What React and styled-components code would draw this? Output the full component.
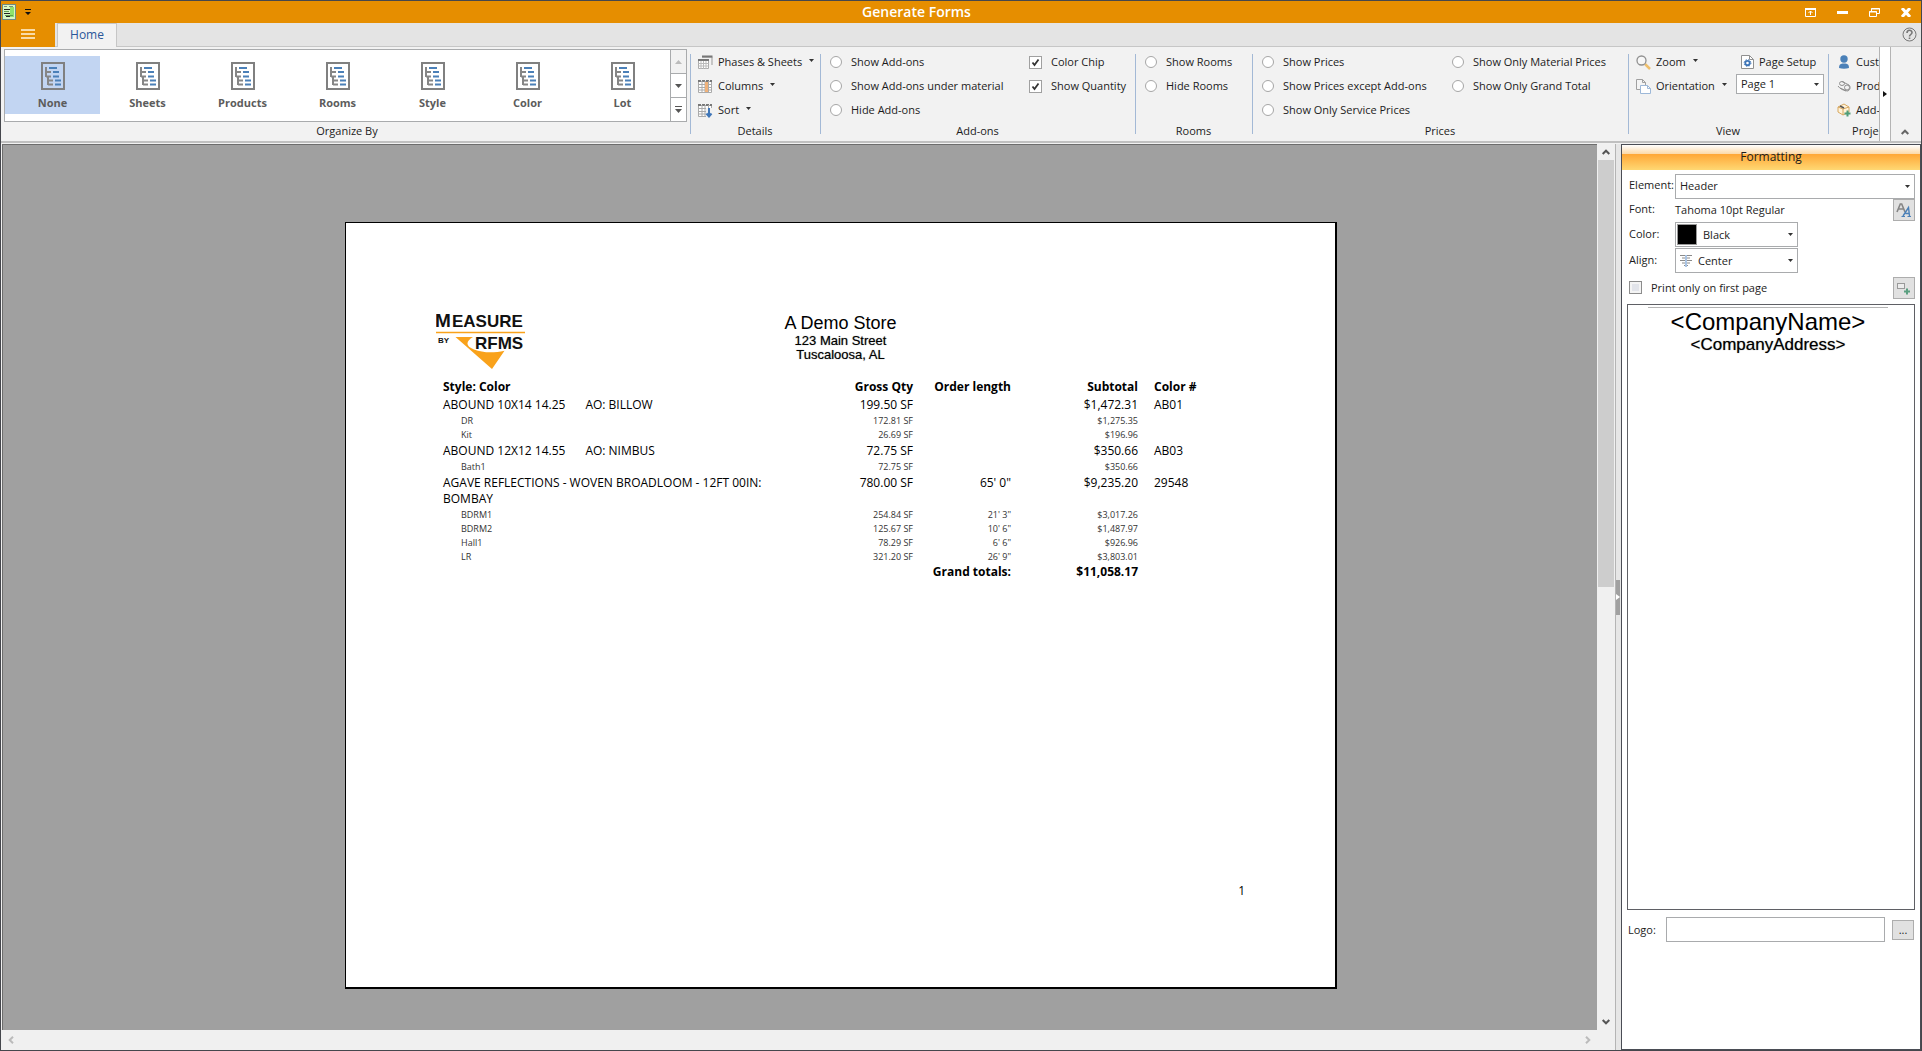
import React from 'react';
import styled, { createGlobalStyle, css } from 'styled-components';

const GlobalStyle = createGlobalStyle`
  *, *::before, *::after { box-sizing: border-box; }
  body { margin: 0; background: #f2f2f2; }
  body, button, input, select {
    font-family: "Open Sans", "Noto Sans", sans-serif;
    font-size: 11px;
    line-height: 16px;
    color: #1c1c1c;
  }
  button { padding: 0; border: 0; background: none; }
`;

const Window = styled.div`
  display: flex;
  flex-direction: column;
  height: 100vh;
  border: 1px solid #45474d;
  overflow: hidden;
`;

/* Title bar */
const TitleBar = styled.header`
  display: flex;
  align-items: center;
  height: 22px;
  flex: none;
  padding: 0 7px 0 1px;
  background: #e68e00;
`;
const TitleSide = styled.div`
  display: flex;
  align-items: center;
  gap: 9px;
  width: 29px;
`;
const Title = styled.h1`
  flex: 1;
  margin: 0;
  text-align: center;
  font-size: 14px;
  line-height: 20px;
  font-weight: 600;
  color: #fff;
`;
const WindowButtons = styled.div`
  display: flex;
  align-items: center;
  gap: 16px;
`;
const GlyphButton = styled.button`
  display: flex;
  align-items: center;
  justify-content: center;
  width: 16px;
  height: 16px;
`;

/* Tabs */
const TabBar = styled.nav`
  display: flex;
  height: 24px;
  flex: none;
  background: #e4e4e4;
  border-bottom: 1px solid #c6c6c6;
  padding-right: 4px;
`;
const MenuButton = styled.button`
  width: 54px;
  height: 24px;
  margin-right: 2px;
  background: #e68e00;
`;
const Tab = styled.button`
  width: 60px;
  height: 24px;
  padding-bottom: 1px;
  border: 1px solid #c6c6c6;
  border-bottom: 0;
  background: #f2f2f2;
  color: #2a579a;
  font-size: 12px;
`;
const HelpSlot = styled.div`
  display: flex;
  align-items: center;
  margin-left: auto;
`;

/* Ribbon */
const Ribbon = styled.section`
  display: flex;
  height: 96px;
  flex: none;
  background: #f2f2f2;
  border-bottom: 2px solid #c0c0c0;
`;
const Groups = styled.div`
  display: flex;
  flex: 1;
  min-width: 0;
  overflow: hidden;
  padding-left: 3px;
`;
const Group = styled.div`
  position: relative;
  display: flex;
  flex-direction: column;
  flex: none;
  width: ${(p) => p.$width}px;
  ${(p) => !p.$first && css`
    &::before {
      content: "";
      position: absolute;
      left: 0;
      top: 7px;
      bottom: 7px;
      width: 1px;
      background: #a3b9d6;
    }
  `}
`;
const GroupBody = styled.div`
  display: flex;
  height: 76px;
  padding: ${(p) => p.$pad || '3px 8px 0'};
`;
const GroupLabel = styled.div`
  text-align: center;
  line-height: 16px;
`;

const Gallery = styled.div`
  display: flex;
  width: 683px;
  height: 73px;
  border: 1px solid #a9abad;
  background: #fff;
`;
const GalleryItem = styled.button`
  display: flex;
  flex-direction: column;
  align-items: center;
  gap: 5px;
  width: 95px;
  height: 58px;
  margin-top: 6px;
  padding-top: 6px;
  background: ${(p) => (p.$selected ? '#c2d5f2' : 'transparent')};
  color: #5c5c5c;
  font-weight: 700;
`;
const GalleryScroll = styled.div`
  display: flex;
  flex-direction: column;
  width: 16px;
  border-left: 1px solid #a9abad;
`;
const ScrollStep = styled.button`
  display: flex;
  align-items: center;
  justify-content: center;
  flex: 1;
  background: ${(p) => (p.disabled ? '#f2f2f2' : '#fff')};
  & + & { border-top: 1px solid #a9abad; }
`;

const Stack = styled.div`
  display: flex;
  flex-direction: column;
  width: ${(p) => (p.$width ? p.$width + 'px' : 'auto')};
  flex: none;
`;
const Command = styled.button`
  display: flex;
  align-items: center;
  height: 24px;
  gap: 5px;
  padding-left: ${(p) => p.$indent || 0}px;
  white-space: nowrap;
  svg { flex: none; }
`;
const Choice = styled.label`
  display: flex;
  align-items: center;
  gap: 9px;
  height: 24px;
  white-space: nowrap;
`;
const Radio = styled.input`
  appearance: none;
  width: 12px;
  height: 12px;
  margin: 0;
  border: 1px solid #a6a6a6;
  border-radius: 50%;
  background: #fff;
`;
const Tick = styled.input`
  appearance: none;
  width: 13px;
  height: 13px;
  margin: 0;
  border: 1px solid ${(p) => (p.$grey ? '#8c8c8c' : '#a0a0a0')};
  background: ${(p) => (p.$grey ? '#e2e4ea' : '#fff')};
  box-shadow: ${(p) => (p.$grey ? 'inset 0 0 0 2px #f4f4f4' : 'none')};
  &:checked {
    background: #fff url("data:image/svg+xml,%3Csvg xmlns='http://www.w3.org/2000/svg' viewBox='0 0 11 11'%3E%3Cpath d='M2.5 5.5 4.5 8 8.5 2.5' fill='none' stroke='%23333' stroke-width='1.8'/%3E%3C/svg%3E") center / 11px 11px;
  }
`;
const InnerRule = styled.div`
  width: 1px;
  height: 66px;
  margin: 3px 4px 0 0;
  background: #a8a8a8;
`;
const RibbonScroll = styled.button`
  display: flex;
  align-items: center;
  justify-content: center;
  width: 12px;
  flex: none;
  background: #fff;
  border: 1px solid #b4b4b4;
  border-width: 0 1px;
`;
const RibbonEnd = styled.div`
  display: flex;
  align-items: flex-end;
  justify-content: center;
  width: 30px;
  flex: none;
  padding: 0 3px 1px 0;
`;

/* Drop-downs */
const SelectBox = styled.div`
  display: flex;
  align-items: center;
  height: ${(p) => p.$height || 25}px;
  width: ${(p) => (p.$width ? p.$width + 'px' : '100%')};
  gap: 3px;
  padding: 0 4px 0 ${(p) => p.$inset || 1}px;
  border: 1px solid #a9abad;
  background: #fff;
`;
const Select = styled.select`
  appearance: none;
  flex: 1;
  min-width: 0;
  height: 100%;
  padding: 0 0 0 3px;
  border: 0;
  outline: 0;
  background: transparent;
  font-size: ${(p) => p.$size || 11}px;
`;

/* Work area */
const Work = styled.main`
  display: flex;
  flex: 1;
  min-height: 0;
  padding-top: 1px;
`;
const Viewer = styled.section`
  display: grid;
  grid-template: minmax(0, 1fr) 20px / minmax(0, 1fr) 18px;
  flex: 1;
  min-width: 0;
  padding-left: 1px;
  background: #f0f0f0;
`;
const Canvas = styled.div`
  overflow: hidden;
  padding: 77px 0 0 82px;
  background: #a0a0a0;
  border: 1px solid #6d6d6d;
  border-width: 1px 0 0 1px;
`;
const ScrollBar = styled.div`
  display: flex;
  flex-direction: ${(p) => (p.$across ? 'row' : 'column')};
  align-items: center;
  justify-content: space-between;
  padding: 0 1px;
  background: #f0f0f0;
`;
const Track = styled.div`
  flex: 1;
  align-self: stretch;
`;
const Thumb = styled.div`
  height: 50%;
  background: #cdcdcd;
`;
const Splitter = styled.div`
  display: flex;
  align-items: center;
  width: 6px;
  background: #e6e6e6;
  border-left: 1px solid #b4b4b4;
`;
const Grip = styled.div`
  display: flex;
  align-items: center;
  width: 4px;
  height: 35px;
  background: #a0a0a0;
`;

/* Report page */
const Sheet = styled.article`
  display: flex;
  flex-direction: column;
  width: 992px;
  height: 767px;
  margin: 0 auto;
  padding: 88px 90px;
  border: 1px solid #000;
  border-width: 1px 2px 2px 1px;
  background: #fff;
  color: #000;
`;
const SheetHead = styled.div`
  display: grid;
  grid-template-columns: 94px 1fr 94px;
  height: 67px;
`;
const Company = styled.div`
  padding-top: 1px;
  text-align: center;
  font-family: "Liberation Sans", Arial, sans-serif;
  font-size: 13px;
  line-height: 14px;
  text-shadow: 0 0 1px #777;
`;
const CompanyTitle = styled.div`
  font-size: 18px;
  line-height: 22px;
  text-shadow: none;
`;
const Report = styled.table`
  width: 760px;
  margin-left: 7px;
  border-collapse: collapse;
  table-layout: fixed;
  th, td {
    padding: 1px 0;
    text-align: right;
    vertical-align: top;
    font-size: 12px;
    line-height: 16px;
    font-weight: 400;
    white-space: nowrap;
  }
  th { font-weight: 700; }
  tfoot th { padding: 0; }
  th:first-child, td:first-child { text-align: left; white-space: normal; }
  th:last-child, td:last-child { padding-left: 16px; text-align: left; }
`;
const RoomRow = styled.tr`
  && td {
    padding: 0;
    font-size: 9px;
    line-height: 14px;
    color: #333;
  }
  && td:first-child { padding-left: 18px; }
`;
const AddOn = styled.span`
  margin-left: 20px;
`;
const PageNumber = styled.div`
  margin-top: auto;
  text-align: right;
  font-size: 12px;
`;

/* Formatting panel */
const Panel = styled.aside`
  display: flex;
  flex-direction: column;
  width: 300px;
  flex: none;
  border: 1px solid #4a4d55;
  background: #fff;
`;
const PanelTitle = styled.h2`
  margin: 0;
  height: 25px;
  flex: none;
  text-align: center;
  font-size: 12px;
  line-height: 24px;
  font-weight: 400;
  background: linear-gradient(#fff, #fcd9a8 36%, #ffa838 38%, #ffd873);
`;
const Form = styled.div`
  display: flex;
  flex-direction: column;
  flex: 1;
  min-height: 0;
  padding: 4px 5px 0;
`;
const Field = styled.div`
  display: flex;
  align-items: center;
  height: ${(p) => p.$height || 25}px;
  flex: none;
  padding-left: 2px;
  margin-bottom: 1px;
`;
const FieldLabel = styled.label`
  width: 46px;
  flex: none;
  padding-bottom: 2px;
  white-space: nowrap;
`;
const FieldValue = styled.span`
  flex: 1;
`;
const ToolButton = styled.button`
  display: flex;
  align-items: center;
  justify-content: center;
  width: 22px;
  height: ${(p) => p.$height || 22}px;
  flex: none;
  margin-left: auto;
  border: 1px solid #adadad;
  background: #e1e1e1;
`;
const Swatch = styled.span`
  width: 20px;
  height: 21px;
  border: 1px solid #9a9a9a;
  background: #000;
`;
const Preview = styled.div`
  display: flex;
  flex-direction: column;
  align-items: center;
  height: 606px;
  margin-top: 2px;
  border: 1px solid #5f6065;
  padding: 2px 26px 2px 20px;
  font-family: "Liberation Sans", Arial, sans-serif;
  color: #000;
`;
const PreviewRule = styled.div`
  align-self: stretch;
  height: 1px;
  background: #b4b4b4;
`;
const PreviewName = styled.div`
  font-size: 24px;
  line-height: 28px;
`;
const PreviewAddress = styled.div`
  font-size: 17px;
  line-height: 18px;
  text-shadow: 0 0 1px #777;
`;
const LogoRow = styled.div`
  display: flex;
  align-items: center;
  padding: 7px 1px 0;
`;
const LogoInput = styled.input`
  flex: 1;
  min-width: 0;
  height: 25px;
  margin-right: 7px;
  border: 1px solid #a9abad;
`;
const LogoLabel = styled.label`
  width: 38px;
`;

/* Drawings */
const Caret = ({ color = '#333' }) => (
  <svg width="5" height="3" viewBox="0 0 5 3"><path d="M0 0h5L2.5 3z" fill={color} /></svg>
);
const CommandCaret = styled.span`
  display: flex;
  padding: 0 0 3px 2px;
`;
const Chevron = ({ turn = 0, color = '#555' }) => (
  <svg width="16" height="16" viewBox="0 0 16 16">
    <path d="M4.7 10 8 6.7 11.3 10" fill="none" stroke={color} strokeWidth="2" transform={`rotate(${turn} 8 8)`} />
  </svg>
);
const AppIcon = () => (
  <svg width="14" height="16" viewBox="0 0 14 16">
    <rect x=".5" y=".5" width="13" height="15" fill="#d9f7c4" stroke="#6f8b86" />
    <path d="M8 3h4v10H8z" fill="#8fe36c" />
    <path d="M2 2.5h3M7 2.5h4" stroke="#7a8a7a" />
    <path d="M2 5.5h6M2 9.5h6M4 12.5h4" stroke="#222" />
    <path d="M2 7.5h5M3 11.5h8" stroke="#5f9e52" />
  </svg>
);
const QuickIcon = () => (
  <svg width="6" height="7" viewBox="0 0 6 7"><path d="M0 0h6v1H0zM0 3h6L3 6z" fill="#111" /></svg>
);
const MenuIcon = () => (
  <svg width="14" height="10" viewBox="0 0 14 10"><path d="M0 1h14M0 5h14M0 9h14" stroke="#fff5e0" strokeWidth="1.5" /></svg>
);
const TreeIcon = () => (
  <svg width="24" height="28" viewBox="0 0 24 28">
    <rect x="1" y="1" width="22" height="26" fill="none" stroke="#808080" strokeWidth="2" />
    <path d="M5 5v10M5 10h5M5 14.5h5M7 15v8M7 18.5h5M7 22.5h5" fill="none" stroke="#868686" strokeWidth="2" />
    <path d="M8 6h8M12 10h6M12 14.5h6M14 18.5h6M14 22.5h6" stroke="#4b80b8" strokeWidth="2" />
  </svg>
);
const GridIcon = ({ kind }) => (
  <svg width="15" height="15" viewBox="0 0 15 15">
    {kind === 'sheets' ? (
      <g>
        <path d="M4 2h10v8" fill="none" stroke="#999" strokeWidth="1" />
        <path d="M4 1.5h10.5" stroke="#777" strokeWidth="2" />
        <path d="M.5 5.5h10v8H.5z" fill="#fff" stroke="#aaa" />
        <path d="M0 5h11" stroke="#777" strokeWidth="2" />
        <path d="M.5 8.5h10M.5 11h10M3 6v8M5.500 6v8M8 6v8" stroke="#bbb" />
      </g>
    ) : (
      <g>
        <path d="M.5 2.5h13v11H.5z" fill="#fff" stroke="#aaa" />
        <path d="M0 2h14" stroke="#777" strokeWidth="2" strokeDasharray="3 1" />
        <path d="M.5 5.5h13M.5 8.5h13M.5 11h13M4 2v12M7 2v12M10.5 2v12" stroke="#aaa" />
        {kind === 'columns' && <path d="M7 3h3v10H7z" fill="#f0b27a" />}
        {kind === 'sort' && (
          <g>
            <path d="M8 5h6v9H8z" fill="#f2f2f2" />
            <path d="M11 5v8M8.5 10.5 11 13.5l2.5-3" fill="none" stroke="#3f76b8" strokeWidth="2" />
          </g>
        )}
      </g>
    )}
  </svg>
);
const ZoomIcon = () => (
  <svg width="15" height="15" viewBox="0 0 15 15">
    <path d="m9 9 5 5" stroke="#eebf6d" strokeWidth="2.5" />
    <circle cx="5.5" cy="5.5" r="4.5" fill="#f7f7f7" stroke="#909090" strokeWidth="1.3" />
  </svg>
);
const OrientationIcon = () => (
  <svg width="15" height="15" viewBox="0 0 15 15">
    <path d="M.5.5h6l3 3v7h-9z" fill="#f4f4f4" stroke="#a0a0a0" />
    <path d="M6.5.5v3h3" fill="none" stroke="#a0a0a0" />
    <path d="M4.5 6.5h7l3 3v5h-10z" fill="#fff" stroke="#9db8d8" />
    <path d="M11.5 6.5v3h3" fill="none" stroke="#9db8d8" />
  </svg>
);
const PageSetupIcon = () => (
  <svg width="13" height="14" viewBox="0 0 13 14">
    <path d="M.5.5h8l4 4v9H.5z" fill="#fff" stroke="#909090" />
    <path d="M8.5.5v4h4" fill="none" stroke="#909090" />
    <circle cx="6.5" cy="8" r="2.200" fill="none" stroke="#3f76b8" strokeWidth="1.8" />
    <circle cx="6.5" cy="8" r="3.4" fill="none" stroke="#3f76b8" strokeDasharray="1.3 1.4" />
  </svg>
);
const PersonIcon = () => (
  <svg width="14" height="14" viewBox="0 0 14 14">
    <circle cx="7" cy="4" r="3.7" fill="#4a80b8" />
    <path d="M2 13c0-3 1-4 3.5-4.500h3C11 9 12 10 12 13c-3 1-7 1-10 0z" fill="#4a80b8" />
  </svg>
);
const RollIcon = () => (
  <svg width="14" height="14" viewBox="0 0 14 14" fill="none" stroke="#8f8f8f">
    <path d="M5 2.5 12 6c2 2 1 6-2 6L3 9M1 7c2 3 5 4 8 5" />
    <ellipse cx="5" cy="4.5" rx="2.5" ry="2" />
    <ellipse cx="10" cy="8.5" rx="2.5" ry="2.5" />
  </svg>
);
const AddBoxIcon = () => (
  <svg width="14" height="14" viewBox="0 0 14 14">
    <path d="m1 4 6-3 5 3v5l-6 3-5-3z" fill="#fff3d9" stroke="#d8a860" />
    <path d="m1 4 5 2 6-2M6 6v6" fill="none" stroke="#d8a860" />
    <path d="m3 3 4 2" stroke="#555" strokeWidth="1.5" />
    <path d="M10.5 7.5v6M7.5 10.5h6" stroke="#4f9d78" strokeWidth="2" />
  </svg>
);
const FontIcon = () => (
  <svg width="16" height="16" viewBox="0 0 16 16" fill="none">
    <path d="M1 10 4.300 2h1.400L9 10M2.500 7h5" stroke="#858585" strokeWidth="1.6" />
    <path d="m7 14 5.500-8.500 1 8.500M9.500 11.500h4" stroke="#4b80b8" strokeWidth="1.4" />
    <path d="M5.500 14.5h3.500M11.500 14.5H15" stroke="#4b80b8" />
  </svg>
);
const AddFieldIcon = () => (
  <svg width="16" height="16" viewBox="0 0 16 16">
    <rect x="1.500" y="3.500" width="7" height="5" fill="#ececec" stroke="#999" />
    <path d="M11 8.500v6M8 11.500h6" stroke="#5a9f80" strokeWidth="2" />
  </svg>
);
const CenterIcon = () => (
  <svg width="12" height="12" viewBox="0 0 12 12">
    <path d="M0 .5h12M2 3h8M0 5.500h12M2 8h8M4 10.500h4" stroke="#8a8a8a" />
    <path d="M6 0v12" stroke="#a9c3e3" strokeWidth="2" />
  </svg>
);
const BrandMark = styled.svg`
  display: block;
  font-family: "Liberation Sans", Arial, sans-serif;
  font-weight: 700;
  fill: #111;
`;
const BrandLogo = () => (
  <BrandMark width="94" height="60" viewBox="0 0 94 60" role="img" aria-label="Measure by RFMS">
    <text x="-1" y="16" fontSize="19">M</text>
    <text x="16" y="16" fontSize="17">EASURE</text>
    <text x="2" y="32" fontSize="8">BY</text>
    <path d="M0 21.500h89" stroke="#f9a21b" strokeWidth="1.300" />
    <path d="M19.500 26H37c-7 4-8 9 1 12.500 9 3.500 20 3.500 30.500 1.200L56 58z" fill="#f9a21b" />
    <text x="39" y="38" fontSize="17">RFMS</text>
  </BrandMark>
);

const galleryItems = ['None', 'Sheets', 'Products', 'Rooms', 'Style', 'Color', 'Lot'];

const lines = [
  { name: 'ABOUND 10X14 14.25', extra: 'AO: BILLOW', qty: '199.50 SF', total: '$1,472.31', color: 'AB01' },
  { room: 'DR', qty: '172.81 SF', total: '$1,275.35' },
  { room: 'Kit', qty: '26.69 SF', total: '$196.96' },
  { name: 'ABOUND 12X12 14.55', extra: 'AO: NIMBUS', qty: '72.75 SF', total: '$350.66', color: 'AB03' },
  { room: 'Bath1', qty: '72.75 SF', total: '$350.66' },
  { name: 'AGAVE REFLECTIONS - WOVEN BROADLOOM - 12FT 00IN: BOMBAY', qty: '780.00 SF', length: '65\' 0"', total: '$9,235.20', color: '29548' },
  { room: 'BDRM1', qty: '254.84 SF', length: '21\' 3"', total: '$3,017.26' },
  { room: 'BDRM2', qty: '125.67 SF', length: '10\' 6"', total: '$1,487.97' },
  { room: 'Hall1', qty: '78.29 SF', length: '6\' 6"', total: '$926.96' },
  { room: 'LR', qty: '321.20 SF', length: '26\' 9"', total: '$3,803.01' },
];

function RadioList({ name, items, width }) {
  return (
    <Stack $width={width}>
      {items.map((text) => (
        <Choice key={text}>
          <Radio type="radio" name={name} />
          {text}
        </Choice>
      ))}
    </Stack>
  );
}

function RibbonBar() {
  return (
    <Ribbon>
      <Groups>
        <Group $width={686} $first>
          <GroupBody $pad="2px 0 0">
            <Gallery>
              {galleryItems.map((text) => (
                <GalleryItem key={text} $selected={text === 'None'}>
                  <TreeIcon />
                  {text}
                </GalleryItem>
              ))}
              <GalleryScroll>
                <ScrollStep disabled aria-label="Scroll up">
                  <svg width="7" height="4" viewBox="0 0 7 4"><path d="M0 4h7L3.500 0z" fill="#bbb" /></svg>
                </ScrollStep>
                <ScrollStep aria-label="Scroll down">
                  <svg width="7" height="4" viewBox="0 0 7 4"><path d="M0 0h7L3.500 4z" fill="#555" /></svg>
                </ScrollStep>
                <ScrollStep aria-label="More">
                  <svg width="7" height="7" viewBox="0 0 7 7"><path d="M0 0h7v1H0zM0 3h7L3.500 7z" fill="#555" /></svg>
                </ScrollStep>
              </GalleryScroll>
            </Gallery>
          </GroupBody>
          <GroupLabel>Organize By</GroupLabel>
        </Group>
        <Group $width={130}>
          <GroupBody>
            <Stack>
              <Command><GridIcon kind="sheets" />Phases &amp; Sheets<CommandCaret><Caret /></CommandCaret></Command>
              <Command><GridIcon kind="columns" />Columns<CommandCaret><Caret /></CommandCaret></Command>
              <Command><GridIcon kind="sort" />Sort<CommandCaret><Caret /></CommandCaret></Command>
            </Stack>
          </GroupBody>
          <GroupLabel>Details</GroupLabel>
        </Group>
        <Group $width={315}>
          <GroupBody $pad="3px 10px 0">
            <RadioList name="addons" width={199} items={['Show Add-ons', 'Show Add-ons under material', 'Hide Add-ons']} />
            <Stack>
              {['Color Chip', 'Show Quantity'].map((text) => (
                <Choice key={text}>
                  <Tick type="checkbox" defaultChecked />
                  {text}
                </Choice>
              ))}
            </Stack>
          </GroupBody>
          <GroupLabel>Add-ons</GroupLabel>
        </Group>
        <Group $width={117}>
          <GroupBody $pad="3px 10px 0">
            <RadioList name="rooms" items={['Show Rooms', 'Hide Rooms']} />
          </GroupBody>
          <GroupLabel>Rooms</GroupLabel>
        </Group>
        <Group $width={376}>
          <GroupBody $pad="3px 10px 0">
            <RadioList name="prices" width={190} items={['Show Prices', 'Show Prices except Add-ons', 'Show Only Service Prices']} />
            <RadioList name="prices" items={['Show Only Material Prices', 'Show Only Grand Total']} />
          </GroupBody>
          <GroupLabel>Prices</GroupLabel>
        </Group>
        <Group $width={200}>
          <GroupBody>
            <Stack $width={96}>
              <Command><ZoomIcon />Zoom<CommandCaret><Caret /></CommandCaret></Command>
              <Command><OrientationIcon />Orientation<CommandCaret><Caret /></CommandCaret></Command>
            </Stack>
            <InnerRule />
            <Stack $width={88}>
              <Command $indent={5}><PageSetupIcon />Page Setup</Command>
              <SelectBox $height={20}>
                <Select aria-label="Page"><option>Page 1</option></Select>
                <Caret />
              </SelectBox>
            </Stack>
          </GroupBody>
          <GroupLabel>View</GroupLabel>
        </Group>
        <Group $width={84}>
          <GroupBody $pad="3px 9px 0">
            <Stack>
              <Command><PersonIcon />Customer</Command>
              <Command><RollIcon />Products</Command>
              <Command><AddBoxIcon />Add-ons</Command>
            </Stack>
          </GroupBody>
          <GroupLabel>Project</GroupLabel>
        </Group>
      </Groups>
      <RibbonScroll aria-label="Scroll ribbon">
        <svg width="4" height="6" viewBox="0 0 4 6"><path d="M0 0v6l4-3z" fill="#111" /></svg>
      </RibbonScroll>
      <RibbonEnd>
        <GlyphButton aria-label="Collapse ribbon"><Chevron color="#666" /></GlyphButton>
      </RibbonEnd>
    </Ribbon>
  );
}

function ReportSheet() {
  return (
    <Sheet>
      <SheetHead>
        <BrandLogo />
        <Company>
          <CompanyTitle>A Demo Store</CompanyTitle>
          <div>123 Main Street</div>
          <div>Tuscaloosa, AL</div>
        </Company>
      </SheetHead>
      <Report>
        <colgroup>
          <col style={{ width: 339 }} />
          <col style={{ width: 131 }} />
          <col style={{ width: 98 }} />
          <col style={{ width: 127 }} />
          <col />
        </colgroup>
        <thead>
          <tr>
            <th>Style: Color</th>
            <th>Gross Qty</th>
            <th>Order length</th>
            <th>Subtotal</th>
            <th>Color #</th>
          </tr>
        </thead>
        <tbody>
          {lines.map((l, i) => {
            const Row = l.room ? RoomRow : 'tr';
            return (
              <Row key={i}>
                <td>{l.room || l.name}{l.extra && <AddOn>{l.extra}</AddOn>}</td>
                <td>{l.qty}</td>
                <td>{l.length}</td>
                <td>{l.total}</td>
                <td>{l.color}</td>
              </Row>
            );
          })}
        </tbody>
        <tfoot>
          <tr>
            <td />
            <td />
            <th>Grand totals:</th>
            <th>$11,058.17</th>
            <td />
          </tr>
        </tfoot>
      </Report>
      <PageNumber>1</PageNumber>
    </Sheet>
  );
}

function FormattingPanel() {
  return (
    <Panel>
      <PanelTitle>Formatting</PanelTitle>
      <Form>
        <Field $height={24}>
          <FieldLabel htmlFor="element">Element:</FieldLabel>
          <SelectBox>
            <Select id="element"><option>Header</option></Select>
            <Caret />
          </SelectBox>
        </Field>
        <Field $height={22}>
          <FieldLabel as="span">Font:</FieldLabel>
          <FieldValue>Tahoma 10pt Regular</FieldValue>
          <ToolButton aria-label="Choose font"><FontIcon /></ToolButton>
        </Field>
        <Field>
          <FieldLabel htmlFor="color">Color:</FieldLabel>
          <SelectBox $width={123}>
            <Swatch />
            <Select id="color"><option>Black</option></Select>
            <Caret />
          </SelectBox>
        </Field>
        <Field>
          <FieldLabel htmlFor="align">Align:</FieldLabel>
          <SelectBox $width={123} $inset={4}>
            <CenterIcon />
            <Select id="align"><option>Center</option></Select>
            <Caret />
          </SelectBox>
        </Field>
        <Field $height={27}>
          <Choice>
            <Tick type="checkbox" $grey />
            Print only on first page
          </Choice>
          <ToolButton aria-label="Insert field"><AddFieldIcon /></ToolButton>
        </Field>
        <Preview>
          <PreviewRule />
          <PreviewName>&lt;CompanyName&gt;</PreviewName>
          <PreviewAddress>&lt;CompanyAddress&gt;</PreviewAddress>
        </Preview>
        <LogoRow>
          <LogoLabel htmlFor="logo">Logo:</LogoLabel>
          <LogoInput id="logo" type="text" />
          <ToolButton $height={20} aria-label="Browse">...</ToolButton>
        </LogoRow>
      </Form>
    </Panel>
  );
}

export default function App() {
  return (
    <Window>
      <GlobalStyle />
      <TitleBar>
        <TitleSide>
          <AppIcon />
          <QuickIcon />
        </TitleSide>
        <Title>Generate Forms</Title>
        <WindowButtons>
          <GlyphButton aria-label="Ribbon display options">
            <svg width="11" height="9" viewBox="0 0 11 9"><path d="M.5.5h10v8H.5z" fill="none" stroke="#fff" /><path d="M0 1h11" stroke="#fff" strokeWidth="2" /><path d="M5.500 3v4M3.500 5l2-2 2 2" fill="none" stroke="#fff" /></svg>
          </GlyphButton>
          <GlyphButton aria-label="Minimize">
            <svg width="11" height="3"><path d="M0 0h11v3H0z" fill="#fff" /></svg>
          </GlyphButton>
          <GlyphButton aria-label="Restore">
            <svg width="11" height="9" viewBox="0 0 11 9"><path d="M2.500 3V.5h8v5H8" fill="none" stroke="#fff" /><path d="M2 1h9" stroke="#fff" /><path d="M.5 3.500h7v5h-7zM0 4h8" fill="none" stroke="#fff" /></svg>
          </GlyphButton>
          <GlyphButton aria-label="Close">
            <svg width="10" height="9" viewBox="0 0 10 9"><path d="m1 0 8 9M9 0 1 9" stroke="#fff" strokeWidth="3" /></svg>
          </GlyphButton>
        </WindowButtons>
      </TitleBar>
      <TabBar>
        <MenuButton aria-label="Menu"><MenuIcon /></MenuButton>
        <Tab>Home</Tab>
        <HelpSlot>
          <GlyphButton aria-label="Help">
            <svg width="15" height="15" viewBox="0 0 15 15" fill="none" stroke="#777">
              <circle cx="7.500" cy="7.500" r="6.500" />
              <path d="M5 6c0-3.500 5-3.500 5-.5 0 2-2.500 2-2.500 4M7.500 10.500v1.500" strokeWidth="1.600" />
            </svg>
          </GlyphButton>
        </HelpSlot>
      </TabBar>
      <RibbonBar />
      <Work>
        <Viewer>
          <Canvas>
            <ReportSheet />
          </Canvas>
          <ScrollBar>
            <Chevron />
            <Track><Thumb /></Track>
            <Chevron turn={180} />
          </ScrollBar>
          <ScrollBar $across>
            <Chevron turn={-90} color="#bbb" />
            <Chevron turn={90} color="#bbb" />
          </ScrollBar>
        </Viewer>
        <Splitter>
          <Grip><svg width="4" height="6" viewBox="0 0 4 6"><path d="M0 0v6l4-3z" fill="#fff" /></svg></Grip>
        </Splitter>
        <FormattingPanel />
      </Work>
    </Window>
  );
}
